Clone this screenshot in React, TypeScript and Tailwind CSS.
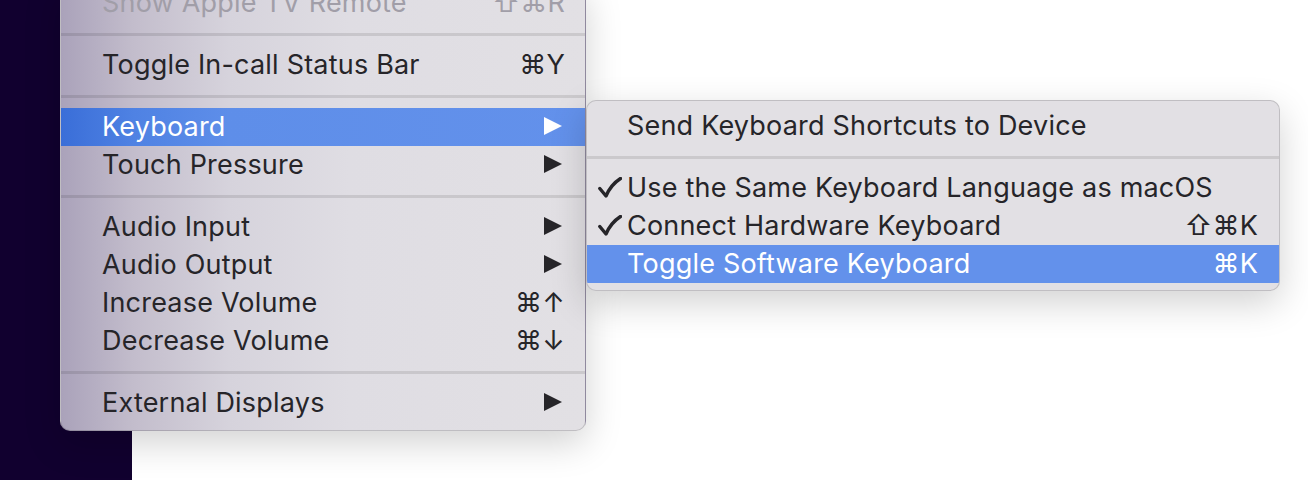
import type { ReactNode } from 'react';

type Item =
  | { kind: 'sep' }
  | {
      kind: 'row';
      label: string;
      shortcut?: ReactNode;
      submenu?: boolean;
      checked?: boolean;
      active?: boolean;
      disabled?: boolean;
    };

const mainItems: Item[] = [
  { kind: 'row', label: 'Show Apple TV Remote', shortcut: '⇧⌘R', disabled: true },
  { kind: 'sep' },
  { kind: 'row', label: 'Toggle In-call Status Bar', shortcut: '⌘Y' },
  { kind: 'sep' },
  { kind: 'row', label: 'Keyboard', submenu: true, active: true },
  { kind: 'row', label: 'Touch Pressure', submenu: true },
  { kind: 'sep' },
  { kind: 'row', label: 'Audio Input', submenu: true },
  { kind: 'row', label: 'Audio Output', submenu: true },
  { kind: 'row', label: 'Increase Volume', shortcut: '⌘↑' },
  { kind: 'row', label: 'Decrease Volume', shortcut: '⌘↓' },
  { kind: 'sep' },
  { kind: 'row', label: 'External Displays', submenu: true },
];

const keyboardItems: Item[] = [
  { kind: 'row', label: 'Send Keyboard Shortcuts to Device' },
  { kind: 'sep' },
  { kind: 'row', label: 'Use the Same Keyboard Language as macOS', checked: true },
  { kind: 'row', label: 'Connect Hardware Keyboard', checked: true, shortcut: '⇧⌘K' },
  { kind: 'row', label: 'Toggle Software Keyboard', shortcut: '⌘K', active: true },
];

function Arrow({ light }: { light?: boolean }) {
  return (
    <svg width="18" height="18" viewBox="0 0 18 18" className="mr-[3px]">
      <polygon points="0,0 18,9 0,18" fill={light ? '#ffffff' : '#262529'} />
    </svg>
  );
}

function Check() {
  return (
    <svg width="24" height="21" viewBox="0 0 24 21">
      <path
        d="M1.8 11.5 L8 19 C11 12 15.5 6 22.5 1.5"
        fill="none"
        stroke="#262529"
        strokeWidth="3.4"
        strokeLinecap="round"
        strokeLinejoin="round"
      />
    </svg>
  );
}

function Menu({ items, main }: { items: Item[]; main?: boolean }) {
  return (
    <div>
      {items.map((item, i) => {
        if (item.kind === 'sep') {
          return (
            <div key={i} className="flex h-[24px] items-center">
              <div className="h-[3px] w-full bg-black/10" />
            </div>
          );
        }
        const rowBg = item.active
          ? main
            ? 'bg-[linear-gradient(90deg,#3a6ed8_0%,#4f82e3_14%,#5e8ee9_32%,#6391eb_100%)]'
            : 'bg-[#6391eb]'
          : '';
        const color = item.active ? 'text-white' : item.disabled ? 'text-[#a19ea8]' : 'text-[#262529]';
        return (
          <div key={i} className={`flex h-[38px] items-center pb-[2px] ${rowBg} ${color}`}>
            <div className={`flex shrink-0 items-center ${main ? 'w-[41px]' : 'w-[40px] pl-[11px]'}`}>
              {item.checked && <Check />}
            </div>
            <span className="flex-1 whitespace-nowrap">{item.label}</span>
            <span className={`flex items-center whitespace-nowrap ${main ? 'pr-[20px]' : 'pr-[21px]'}`}>
              {item.submenu ? <Arrow light={item.active} /> : item.shortcut}
            </span>
          </div>
        );
      })}
    </div>
  );
}

export default function App() {
  return (
    <div
      className="relative flex h-[480px] w-[1308px] overflow-hidden bg-white text-[27px] leading-none tracking-[0.2px]"
      style={{ fontFamily: 'Inter, "Noto Sans", "DejaVu Sans", sans-serif' }}
    >
      <div className="h-full w-[132px] bg-[#11002f]" />
      <div className="flex-1 bg-white" />

      <div className="absolute left-[60px] top-[-17px] w-[526px] overflow-hidden rounded-[10px] border border-black/15 bg-[linear-gradient(90deg,#aaa2ba_0%,#c3bdcc_14%,#d6d3dc_32%,#dfdde3_55%,#e2e0e4_100%)] pb-[8px] shadow-[0_12px_36px_rgba(0,0,0,0.18)]">
        <Menu items={mainItems} main />
      </div>

      <div className="absolute left-[586px] top-[100px] w-[694px] overflow-hidden rounded-[10px] border border-black/15 bg-[#e2e0e4] pt-[6px] pb-[7px] shadow-[0_12px_36px_rgba(0,0,0,0.18)]">
        <Menu items={keyboardItems} />
      </div>
    </div>
  );
}
